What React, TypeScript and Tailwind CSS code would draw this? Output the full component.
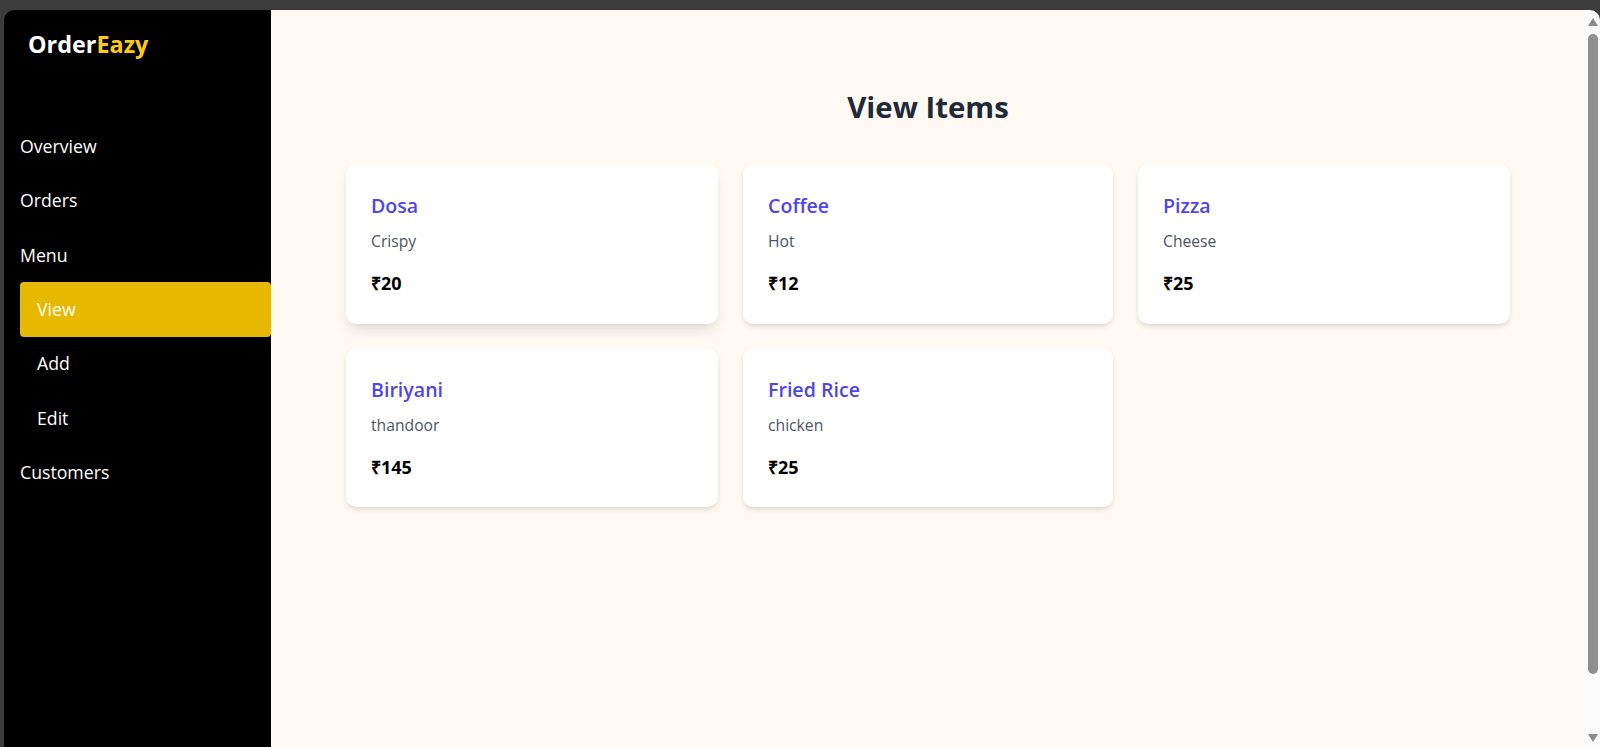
const items = [
  { name: "Dosa", desc: "Crispy", price: 20, raised: true },
  { name: "Coffee", desc: "Hot", price: 12 },
  { name: "Pizza", desc: "Cheese", price: 25 },
  { name: "Biriyani", desc: "thandoor", price: 145 },
  { name: "Fried Rice", desc: "chicken", price: 25 },
];

function NavItem({ label, sub, active }: { label: string; sub?: boolean; active?: boolean }) {
  return (
    <div
      className={[
        "flex h-[54.4px] items-center text-[17.7px] text-white",
        sub ? "pl-[17px]" : "",
        active ? "rounded-[4px] bg-[#e6b800]" : "",
      ].join(" ")}
    >
      {label}
    </div>
  );
}

function ItemCard({ name, desc, price, raised }: { name: string; desc: string; price: number; raised?: boolean }) {
  return (
    <div
      className={[
        "h-[158.5px] rounded-[10px] bg-white px-[25px] pt-[27px]",
        raised
          ? "shadow-[0_8px_14px_-3px_rgba(0,0,0,0.12),0_3px_6px_-4px_rgba(0,0,0,0.1)]"
          : "shadow-[0_3px_6px_-1px_rgba(0,0,0,0.12),0_2px_4px_-2px_rgba(0,0,0,0.08)]",
      ].join(" ")}
    >
      <h3 className="text-[19.6px] leading-[28px] font-semibold text-[#4f46e5]">{name}</h3>
      <p className="mt-[9px] text-[15.7px] leading-[24px] text-[#4b5563]">{desc}</p>
      <p className="mt-[16px] text-[18px] leading-[28px] font-bold text-black">₹{price}</p>
    </div>
  );
}

function Scrollbar() {
  return (
    <div className="flex w-[15px] shrink-0 flex-col items-center bg-[#fafafa] pt-[24px]">
      <div className="absolute top-[8px] h-0 w-0 border-x-[5px] border-b-[8px] border-x-transparent border-b-[#8a8a8a]" />
      <div className="h-[640px] w-[10px] rounded-full bg-[#8f8f8f]" />
      <div className="absolute bottom-[5px] h-0 w-0 border-x-[5px] border-t-[8px] border-x-transparent border-t-[#8a8a8a]" />
    </div>
  );
}

export default function App() {
  return (
    <div className="h-[747px] overflow-hidden bg-[#3c3c3c] pt-[10px] pl-[4px] font-['Open_Sans',sans-serif]">
      <div className="relative flex h-[737px] overflow-hidden rounded-t-[10px]">
        <aside className="w-[267px] shrink-0 bg-black pl-[16px]">
          <div className="pt-[18px] pl-[8px] text-[23.4px] leading-[32px] font-bold text-white">
            Order<span className="text-[#facc15]">Eazy</span>
          </div>
          <nav className="mt-[59px] flex flex-col">
            <NavItem label="Overview" />
            <NavItem label="Orders" />
            <NavItem label="Menu" />
            <NavItem label="View" sub active />
            <NavItem label="Add" sub />
            <NavItem label="Edit" sub />
            <NavItem label="Customers" />
          </nav>
        </aside>
        <main className="flex-1 bg-[#fff9f3] px-[75px] pt-[79px]">
          <h1 className="text-center text-[29.4px] leading-[36px] font-bold text-[#1f2937]">View Items</h1>
          <div className="mt-[40px] grid grid-cols-[372px_370px_372px] gap-x-[25px] gap-y-[25px]">
            {items.map((item) => (
              <ItemCard key={item.name} {...item} />
            ))}
          </div>
        </main>
        <Scrollbar />
      </div>
    </div>
  );
}
